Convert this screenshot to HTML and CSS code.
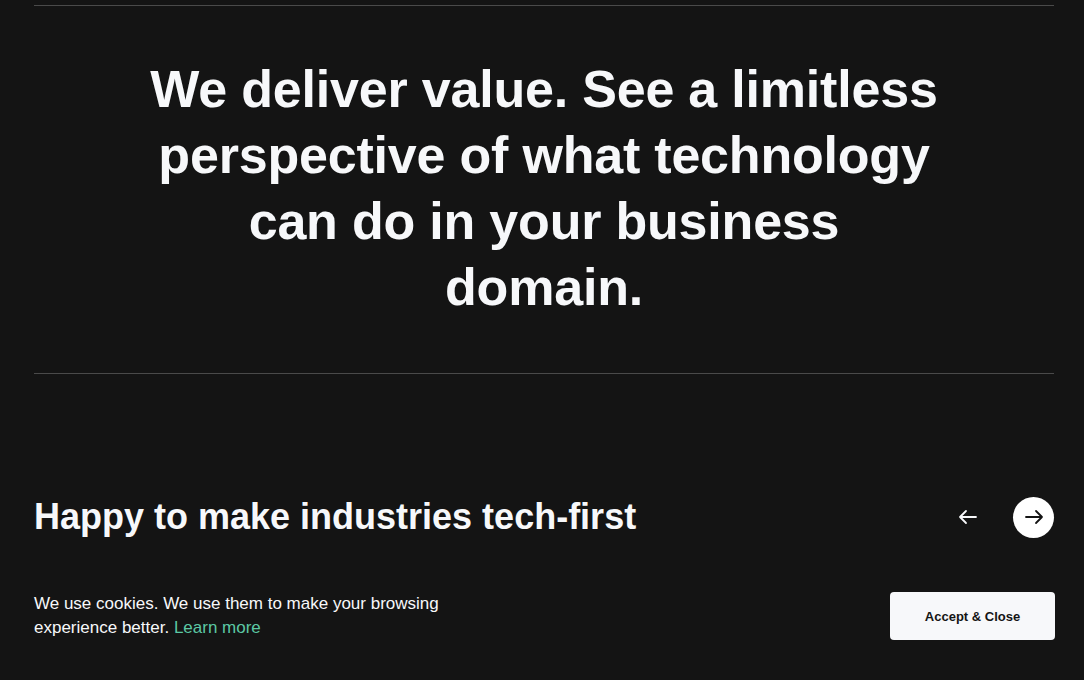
FILE: index.html
```html
<!DOCTYPE html>
<html lang="en">
<head>
<meta charset="utf-8">
<title>We deliver value</title>
<link rel="stylesheet" href="styles.css">
</head>
<body>
<main class="page">
  <section class="statement">
    <h1 class="statement-title">We deliver value. See a limitless perspective of what technology can do in your business domain.</h1>
  </section>
  <section class="industries">
    <h2 class="industries-title">Happy to make industries tech-first</h2>
    <div class="nav">
      <button class="nav-btn nav-prev" aria-label="Previous">
        <svg width="20" height="20" viewBox="0 0 20 20" fill="none" stroke="currentColor" stroke-width="1.8" stroke-linecap="round" stroke-linejoin="round"><path d="M18 10H2M8 4L2 10L8 16"/></svg>
      </button>
      <button class="nav-btn nav-next" aria-label="Next">
        <svg width="20" height="20" viewBox="0 0 20 20" fill="none" stroke="currentColor" stroke-width="1.8" stroke-linecap="round" stroke-linejoin="round"><path d="M2 10H18M12 4L18 10L12 16"/></svg>
      </button>
    </div>
  </section>
</main>
<div class="cookie">
  <p class="cookie-text">We use cookies. We use them to make your browsing experience better. <a href="#" class="cookie-link">Learn more</a></p>
  <button class="cookie-btn">Accept &amp; Close</button>
</div>
</body>
</html>
```
FILE: styles.css
```css
* { box-sizing: border-box; }
html, body { margin: 0; padding: 0; background: #141414; }
body {
  font-family: "Liberation Sans", Arial, sans-serif;
  color: #f7f8fa;
  height: 680px;
  overflow: hidden;
}
.page {
  padding: 0 30px 0 34px;
}
.statement {
  margin-top: 5px;
  border-top: 1px solid #4a4a4a;
  border-bottom: 1px solid #4a4a4a;
  padding: 50px 0 53px;
  display: flex;
  justify-content: center;
}
.statement-title {
  margin: 0;
  max-width: 794px;
  text-align: center;
  font-size: 52px;
  line-height: 66px;
  font-weight: 700;
  letter-spacing: -0.2px;
}
.industries {
  display: flex;
  align-items: center;
  justify-content: space-between;
  padding-top: 121px;
}
.industries-title {
  margin: 0;
  font-size: 36px;
  line-height: 44px;
  font-weight: 700;
}
.nav {
  display: flex;
  align-items: center;
  gap: 25px;
}
.nav-btn {
  width: 41px;
  height: 41px;
  border: none;
  border-radius: 50%;
  display: flex;
  align-items: center;
  justify-content: center;
  padding: 0;
  cursor: pointer;
}
.nav-prev { background: transparent; color: #f7f8fa; }
.nav-next { background: #fff; color: #141414; }
.cookie {
  position: fixed;
  left: 0;
  right: 0;
  bottom: 0;
  height: 128px;
  background: #141414;
  display: flex;
  align-items: center;
  justify-content: space-between;
  padding: 0 29px 0 34px;
}
.cookie-text {
  margin: 0;
  max-width: 420px;
  font-size: 17px;
  line-height: 24px;
  color: #f7f8fa;
}
.cookie-link {
  color: #5cc8a4;
  text-decoration: none;
}
.cookie-btn {
  width: 165px;
  height: 48px;
  border: none;
  border-radius: 4px;
  background: #f7f8fa;
  color: #141414;
  font-family: "Liberation Sans", Arial, sans-serif;
  font-size: 13px;
  font-weight: 700;
}
```
